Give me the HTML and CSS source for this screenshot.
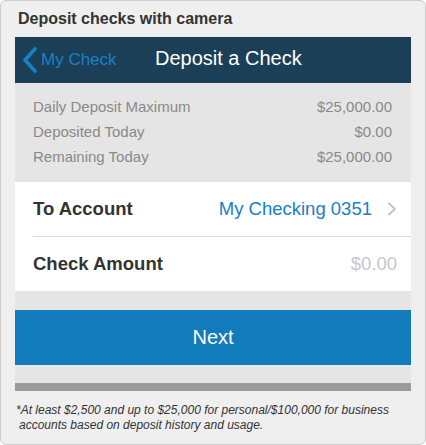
FILE: index.html
```html
<!DOCTYPE html>
<html lang="en">

<head>
    <meta charset="UTF-8">
    <meta name="viewport" content="width=device-width, initial-scale=1.0">
    <title>Deposit checks with camera</title>
    <link rel="stylesheet" href="styles.css">
</head>

<body>
    <div class="card">
        <h2 class="card-title">Deposit checks with camera</h2>

        <div class="screen">
            <div class="nav">
                <a class="back" href="#">
                    <svg width="16" height="26" viewBox="0 0 16 26">
                        <path d="M13 2 L3 13 L13 24" fill="none" stroke="#1a80c7" stroke-width="3.6" stroke-linecap="round" stroke-linejoin="round" />
                    </svg>
                    My Check
                </a>
                <span class="nav-title">Deposit a Check</span>
            </div>

            <div class="summary">
                <div class="sum-row"><span>Daily Deposit Maximum</span><span>$25,000.00</span></div>
                <div class="sum-row"><span>Deposited Today</span><span>$0.00</span></div>
                <div class="sum-row"><span>Remaining Today</span><span>$25,000.00</span></div>
            </div>

            <div class="form">
                <div class="field">
                    <span class="label">To Account</span>
                    <span class="account">My Checking 0351</span>
                    <svg class="chev" width="10" height="14" viewBox="0 0 10 14">
                        <path d="M2 1.5 L8 7 L2 12.5" fill="none" stroke="#c4c4c8" stroke-width="2" stroke-linecap="round" stroke-linejoin="round" />
                    </svg>
                </div>
                <div class="divider"></div>
                <div class="field amount">
                    <span class="label">Check Amount</span>
                    <span class="placeholder">$0.00</span>
                </div>
            </div>

            <button class="next">Next</button>
            <div class="bottom-bar"></div>
        </div>

        <p class="note">*At least $2,500 and up to $25,000 for personal/$100,000 for business<br><span class="indent">accounts based on deposit history and usage.</span></p>
    </div>
</body>

</html>
```

FILE: styles.css
```css
body {
    margin: 0;
    font-family: "Liberation Sans", Arial, sans-serif;
}

.card {
    box-sizing: border-box;
    width: 426px;
    height: 445px;
    background-color: #efefef;
    border: 1px solid #cdcdcd;
    border-radius: 6px;
}

.card-title {
    margin: 0;
    padding: 0 17px;
    font-size: 16px;
    line-height: 36px;
    font-weight: bold;
    color: #333;
}

.screen {
    margin: 0 14px;
    background-color: #e5e5e5;
}

.nav {
    height: 46px;
    background-color: #1b3f57;
    display: flex;
    align-items: center;
    padding-left: 7px;
}

.back {
    display: flex;
    align-items: center;
    gap: 3px;
    color: #1a80c7;
    text-decoration: none;
    font-size: 17px;
    width: 133px;
}

.nav-title {
    color: #fff;
    font-size: 20px;
    margin-top: -3px;
}

.summary {
    padding: 11px 19px 13px 18px;
}

.sum-row {
    display: flex;
    justify-content: space-between;
    height: 25px;
    line-height: 25px;
    font-size: 15px;
    color: #898989;
}

.form {
    background-color: #fff;
}

.field {
    display: flex;
    align-items: center;
    height: 54px;
    padding: 0 14px 0 18px;
}

.label {
    font-size: 18.5px;
    font-weight: bold;
    color: #333;
    flex: 1;
}

.account {
    font-size: 18.5px;
    color: #1a80c7;
}

.chev {
    margin-left: 15px;
}

.divider {
    height: 1px;
    margin-left: 18px;
    background-color: #dcdcdc;
}

.placeholder {
    font-size: 18.5px;
    color: #c7c7cc;
}

.next {
    display: block;
    width: 100%;
    height: 55px;
    margin-top: 19px;
    border: none;
    background-color: #127bbb;
    color: #fff;
    font-family: inherit;
    font-size: 20px;
    padding: 0;
}

.bottom-bar {
    height: 8px;
    margin-top: 18px;
    background-color: #9b9b9b;
}

.note {
    margin: 12px 0 0 15px;
    font-size: 12px;
    line-height: 15px;
    font-style: italic;
    color: #333;
}

.indent {
    padding-left: 3px;
}
```
